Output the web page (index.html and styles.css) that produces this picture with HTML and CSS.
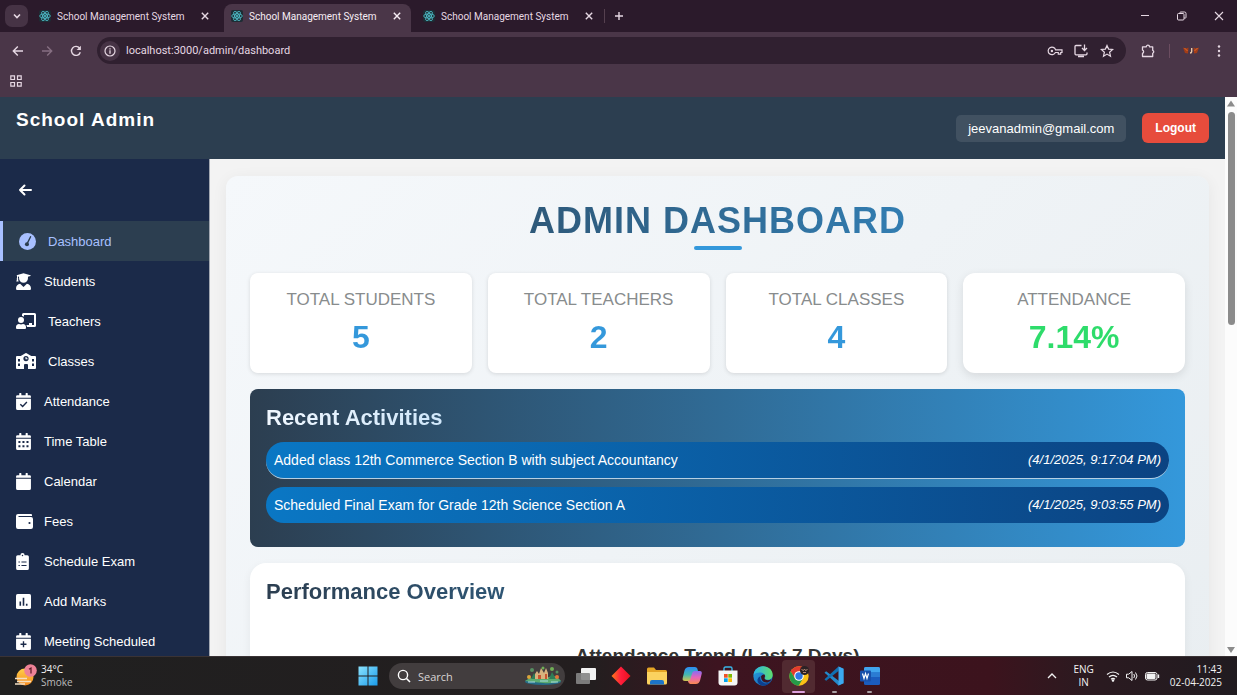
FILE: index.html
```html
<!DOCTYPE html>
<html lang="en">
<head>
<meta charset="utf-8">
<title>School Management System</title>
<link rel="stylesheet" href="styles.css">
</head>
<body>
<svg class="defs" aria-hidden="true">
  <defs>
    <symbol id="react" viewBox="0 0 24 24"><rect width="24" height="24" rx="4" fill="#1d2c34"/><g fill="none" stroke="#4fc0cb" stroke-width="1.7"><ellipse cx="12" cy="12" rx="10.5" ry="4.2"/><ellipse cx="12" cy="12" rx="10.5" ry="4.2" transform="rotate(60 12 12)"/><ellipse cx="12" cy="12" rx="10.5" ry="4.2" transform="rotate(120 12 12)"/></g><circle cx="12" cy="12" r="2.2" fill="#4fc0cb"/></symbol>
    <symbol id="close" viewBox="0 0 14 14"><path d="M3.800 3.800l6.400 6.400M10.200 3.800l-6.400 6.400" fill="none" stroke="currentColor" stroke-width="1.400"/></symbol>
    <linearGradient id="win" x2="1" y2="1"><stop stop-color="#8be3ff"/><stop offset="1" stop-color="#1a9bea"/></linearGradient>
    <linearGradient id="gem" x2="1"><stop stop-color="#ff7a1c"/><stop offset=".5" stop-color="#ff1c3c"/><stop offset="1" stop-color="#e8121c"/></linearGradient>
    <linearGradient id="cop1" x2="0" y2="1"><stop stop-color="#2b8df5"/><stop offset=".5" stop-color="#45b7b0"/><stop offset="1" stop-color="#f3c63a"/></linearGradient>
    <linearGradient id="cop2" x2="0" y2="1"><stop stop-color="#8a6cf0"/><stop offset=".5" stop-color="#e765b8"/><stop offset="1" stop-color="#f98a50"/></linearGradient>
    <linearGradient id="edge1" x2="1" y2="1"><stop stop-color="#2aa5e0"/><stop offset="1" stop-color="#1358b0"/></linearGradient>
    <linearGradient id="edge2" x2="1"><stop stop-color="#2ab4e8"/><stop offset="1" stop-color="#5fdc6c"/></linearGradient>
    <linearGradient id="sun" x2="0" y2="1"><stop stop-color="#ffd04a"/><stop offset="1" stop-color="#f58a1f"/></linearGradient>
  </defs>
</svg>

<header class="chrome">
  <div class="tabstrip">
    <button class="tab-search" aria-label="Search tabs"><svg viewBox="0 0 12 12" width="12" height="12"><path d="M3 4.500l3 3 3-3" fill="none" stroke="currentColor" stroke-width="1.600"/></svg></button>
    <div class="tab"><svg class="favicon"><use href="#react"/></svg><span class="tab-title">School Management System</span><button class="tab-close" aria-label="Close tab"><svg><use href="#close"/></svg></button></div>
    <div class="tab tab-active"><svg class="favicon"><use href="#react"/></svg><span class="tab-title">School Management System</span><button class="tab-close" aria-label="Close tab"><svg><use href="#close"/></svg></button></div>
    <div class="tab"><svg class="favicon"><use href="#react"/></svg><span class="tab-title">School Management System</span><button class="tab-close" aria-label="Close tab"><svg><use href="#close"/></svg></button></div>
    <button class="new-tab" aria-label="New tab"><svg viewBox="0 0 12 12" width="12" height="12"><path d="M6 2v8M2 6h8" stroke="currentColor" stroke-width="1.400"/></svg></button>
    <div class="window-controls">
      <button aria-label="Minimize"><svg viewBox="0 0 12 12" width="12" height="12"><path d="M2 5.500h8" stroke="currentColor"/></svg></button>
      <button aria-label="Restore"><svg viewBox="0 0 12 12" width="12" height="12" fill="none" stroke="currentColor"><rect x="1.500" y="3.500" width="6.500" height="6.500" rx="1"/><path d="M4 3.500v-1q0-.5.500-.5H8.500q1.500 0 1.500 1.500v4q0 .5-.5.500H8"/></svg></button>
      <button aria-label="Close window"><svg viewBox="0 0 12 12" width="12" height="12"><path d="M2 2l8 8M10 2l-8 8" stroke="currentColor" stroke-width="1.100"/></svg></button>
    </div>
  </div>
  <div class="toolbar">
    <div class="nav-buttons">
      <button aria-label="Back"><svg viewBox="0 0 14 14" width="14" height="14"><path d="M12 7H2.500M6.800 2.500L2.300 7l4.500 4.500" fill="none" stroke="currentColor" stroke-width="1.400"/></svg></button>
      <button class="dim" aria-label="Forward"><svg viewBox="0 0 14 14" width="14" height="14"><path d="M2 7h9.500M7.200 2.500L11.700 7l-4.500 4.500" fill="none" stroke="currentColor" stroke-width="1.400"/></svg></button>
      <button aria-label="Reload"><svg viewBox="0 0 14 14" width="14" height="14"><path d="M11.300 8.200A4.500 4.500 0 1 1 10.600 4.200" fill="none" stroke="currentColor" stroke-width="1.400"/><path d="M11.900 1.800v4.300H7.600z" fill="currentColor"/></svg></button>
    </div>
    <div class="omnibox">
      <button class="site-info" aria-label="Site information"><svg viewBox="0 0 12 12" width="12" height="12"><circle cx="6" cy="6" r="5" fill="none" stroke="currentColor" stroke-width="1.200"/><path d="M6 5.300v3.400M6 3.200v1.200" stroke="currentColor" stroke-width="1.300"/></svg></button>
      <input class="address" aria-label="Address" value="localhost:3000/admin/dashboard">
      <button aria-label="Passwords"><svg viewBox="0 0 16 16" width="16" height="16" fill="none" stroke="currentColor" stroke-width="1.200"><path d="M8.600 6.800H15v2.700h-1.300v1.700h-2.400V9.500H8.400A3.800 3.800 0 1 1 8.600 6.800z"/><circle cx="4.900" cy="8" r="1.200" fill="currentColor" stroke="none"/></svg></button>
      <button aria-label="Install app"><svg viewBox="0 0 16 16" width="16" height="16" fill="none" stroke="currentColor" stroke-width="1.300"><path d="M8.500 2.500H3q-1 0-1 1v7.300q0 1 1 1h10q1 0 1-1V9.500M5 13.500h6M11.500 1.500v5.500M9 5l2.500 2.500L14 5"/></svg></button>
      <button aria-label="Bookmark this tab"><svg viewBox="0 0 16 16" width="16" height="16"><path d="M8 2.400l1.600 3.700 4 .4-3 2.700.9 4L8 11.100l-3.500 2.100.9-4-3-2.700 4-.4z" fill="none" stroke="currentColor" stroke-width="1.200"/></svg></button>
    </div>
    <button class="ext" aria-label="Extensions"><svg viewBox="0 0 16 16" width="16" height="16"><path d="M2.500 3.800h3.800a1.600 1.600 0 0 1 3.200 0h3.200v3.500a1.600 1.600 0 0 1 0 3v3.200H2.500v-3.200a1.700 1.700 0 0 0 0-3.200z" fill="none" stroke="currentColor" stroke-width="1.300" stroke-linejoin="round"/></svg></button>
    <span class="divider"></span>
    <button class="profile" aria-label="Profile"><svg viewBox="0 0 16 10" width="16" height="10"><path d="M0 1.500l3 1 2.500-1-.5 6-3-.5zM16 1.500l-3 1-2.500-1 .5 6 3-.5z" fill="#a33d18"/><path d="M1.500 2l3 3M14.500 2l-3 3" stroke="#e06b2c"/><path d="M8.700 2v3.500q0 1.500-1.700 1.500" fill="none" stroke="#e9c9a8" stroke-width="1.400"/></svg></button>
    <button class="menu" aria-label="Menu"><svg viewBox="0 0 12 14" width="12" height="14" fill="currentColor"><circle cx="6" cy="2.500" r="1.200"/><circle cx="6" cy="7" r="1.200"/><circle cx="6" cy="11.500" r="1.200"/></svg></button>
  </div>
  <div class="bookmarks">
    <button aria-label="Apps"><svg viewBox="0 0 12 12" width="12" height="12" fill="none" stroke="currentColor" stroke-width="1.200"><path d="M.8.8h3.700v3.700H.8zM7.500.8h3.700v3.700H7.500zM.8 7.500h3.700v3.700H.8zM7.500 7.500h3.700v3.700H7.500z"/></svg></button>
  </div>
</header>

<div class="viewport">
  <div class="page">
    <header class="topbar">
      <h1 class="brand">School Admin</h1>
      <div class="account"><span class="email">jeevanadmin@gmail.com</span><button class="logout">Logout</button></div>
    </header>
    <div class="layout">
      <aside class="sidebar">
        <button class="collapse" aria-label="Collapse sidebar"><svg viewBox="0 0 16 16" width="16" height="16"><path d="M14 8H3M7.500 3.500L3 8l4.500 4.500" fill="none" stroke="currentColor" stroke-width="2" stroke-linecap="round" stroke-linejoin="round"/></svg></button>
        <nav class="menu-list">
          <a class="item item-wide item-active" href="#"><svg viewBox="0 0 16 16" width="17" height="17"><circle cx="8" cy="8" r="8" fill="currentColor"/><path d="M10.900 3.500l-3 6" stroke="#2c3e50" stroke-width="1.300" stroke-linecap="round"/><circle cx="7.500" cy="10.600" r="1.900" fill="#2c3e50"/></svg>Dashboard</a>
          <a class="item" href="#"><svg viewBox="0 0 14 16" width="15" height="17" fill="currentColor"><path d="M.5 2.200L7 .2l6.500 2q.6.300 0 .6l-2.300.7V5a4.200 4.200 0 0 1-8.400 0V3.500l-1-.3v1.700q.6.500.1 1.100l.5 2H.2l.6-2q-.5-.6.100-1.100V2.900zM3.800 10l3.200 3.100L10.200 10c2.200.2 3.800 1.900 3.800 4.100V15q0 1-1 1H1q-1 0-1-1v-.9C0 11.900 1.600 10.200 3.800 10z"/></svg>Students</a>
          <a class="item item-wide" href="#"><svg viewBox="0 0 20 16" width="20" height="16" fill="currentColor"><path d="M7.500 0h11Q20 0 20 1.500v11q0 1.500-1.500 1.500H11q0-1-.7-2H13v-2h3v2h2V2H8v1.700Q7 3 6 3V1.500Q6 0 7.500 0z"/><circle cx="5" cy="7" r="3"/><path d="M3 11l2 .6L7 11c1.800 0 3 1.400 3 3v1q0 1-1 1H1q-1 0-1-1v-1c0-1.600 1.200-3 3-3z"/></svg>Teachers</a>
          <a class="item item-wide" href="#"><svg viewBox="0 0 20 16" width="20" height="16" fill="currentColor" fill-rule="evenodd"><path d="M9.400.2q.6-.4 1.200 0L15.300 3H19q1 0 1 1v11q0 1-1 1h-7v-4q0-1-1-1H9q-1 0-1 1v4H1q-1 0-1-1V4q0-1 1-1h3.700zM2 6v2.500h2V6zm14 0v2.500h2V6zM2 10.500V13h2v-2.500zm14 0V13h2v-2.500zM10 3a2.600 2.600 0 1 0 0 5.200A2.600 2.600 0 0 0 10 3zm-.5 1h1v1.300h1v1h-2z"/></svg>Classes</a>
          <a class="item" href="#"><svg viewBox="0 0 14 16" width="15" height="17" fill="currentColor"><path d="M0 4.500V3.300Q0 2 1.300 2H3V.5q0-.5.500-.5h1q.5 0 .5.500V2h4V.5q0-.5.500-.5h1q.5 0 .5.500V2h1.700Q14 2 14 3.300v1.200zM0 5.500h14v9q0 1.500-1.500 1.500h-11Q0 16 0 14.500z"/><path d="M4 10.500l2.200 2.200L10.200 8.500" fill="none" stroke="#1b2a49" stroke-width="1.300"/></svg>Attendance</a>
          <a class="item" href="#"><svg viewBox="0 0 14 16" width="15" height="17" fill="currentColor"><path d="M0 4.500V3.300Q0 2 1.300 2H3V.5q0-.5.500-.5h1q.5 0 .5.500V2h4V.5q0-.5.500-.5h1q.5 0 .5.500V2h1.700Q14 2 14 3.300v1.200zM0 5.500h14v9q0 1.500-1.500 1.500h-11Q0 16 0 14.500z"/><path d="M2.200 8.500h9.600M2.200 12.500h9.600" stroke="#1b2a49" stroke-width="1.800" stroke-dasharray="1.900 1.900"/></svg>Time Table</a>
          <a class="item" href="#"><svg viewBox="0 0 14 16" width="15" height="17" fill="currentColor"><path d="M0 4.500V3.300Q0 2 1.300 2H3V.5q0-.5.500-.5h1q.5 0 .5.500V2h4V.5q0-.5.500-.5h1q.5 0 .5.500V2h1.700Q14 2 14 3.300v1.200zM0 5.500h14v9q0 1.500-1.500 1.500h-11Q0 16 0 14.500z"/></svg>Calendar</a>
          <a class="item item-fees" href="#"><svg viewBox="0 0 17 15" width="17" height="15" fill="currentColor"><path d="M2 0h13q1 0 1 1v1H2.500v1H15q2 0 2 2v8q0 2-2 2H2q-2 0-2-2V2q0-2 2-2z"/><circle cx="13.500" cy="9" r="1.100" fill="#1b2a49"/></svg>Fees</a>
          <a class="item item-clip" href="#"><svg viewBox="0 0 12 16" width="13" height="17" fill="currentColor"><path d="M1.500 2H4a2 2 0 0 1 4 0h2.500Q12 2 12 3.500v11q0 1.500-1.500 1.500h-9Q0 16 0 14.500v-11Q0 2 1.500 2z"/><path d="M2.200 8.500h1.300M5 8.500h4.800M2.200 11.800h1.300M5 11.800h4.800" stroke="#1b2a49"/><circle cx="6" cy="2.300" r=".7" fill="#1b2a49"/></svg>Schedule Exam</a>
          <a class="item" href="#"><svg viewBox="0 0 14 14" width="15" height="15" fill="currentColor"><rect width="14" height="14" rx="1.500"/><path d="M4 7v4M7 3.500V11M10 9v2" stroke="#1b2a49" stroke-width="1.500"/></svg>Add Marks</a>
          <a class="item" href="#"><svg viewBox="0 0 14 16" width="15" height="17" fill="currentColor"><path d="M0 4.500V3.300Q0 2 1.300 2H3V.5q0-.5.500-.5h1q.5 0 .5.500V2h4V.5q0-.5.500-.5h1q.5 0 .5.500V2h1.700Q14 2 14 3.300v1.200zM0 5.500h14v9q0 1.500-1.500 1.500h-11Q0 16 0 14.500z"/><path d="M7 7.800v5.600M4.200 10.600h5.600" stroke="#1b2a49" stroke-width="1.300"/></svg>Meeting Scheduled</a>
        </nav>
      </aside>
      <main class="main">
        <section class="board">
          <h2 class="title">ADMIN DASHBOARD</h2>
          <div class="cards">
            <article class="card"><h3>TOTAL STUDENTS</h3><p>5</p></article>
            <article class="card"><h3>TOTAL TEACHERS</h3><p>2</p></article>
            <article class="card"><h3>TOTAL CLASSES</h3><p>4</p></article>
            <article class="card card-rate"><h3>ATTENDANCE</h3><p>7.14%</p></article>
          </div>
          <section class="recent">
            <h3 class="heading heading-light">Recent Activities</h3>
            <ul>
              <li><span>Added class 12th Commerce Section B with subject Accountancy</span><em>(4/1/2025, 9:17:04 PM)</em></li>
              <li><span>Scheduled Final Exam for Grade 12th Science Section A</span><em>(4/1/2025, 9:03:55 PM)</em></li>
            </ul>
          </section>
          <section class="performance">
            <h3 class="heading">Performance Overview</h3>
            <h4>Attendance Trend (Last 7 Days)</h4>
          </section>
        </section>
      </main>
    </div>
  </div>
  <div class="scrollbar">
    <svg viewBox="0 0 12 12" width="12" height="12"><path d="M6 3.500l4 6H2z" fill="#8b8b8b"/></svg>
    <div class="track"><div class="thumb"></div></div>
    <svg viewBox="0 0 12 12" width="12" height="12"><path d="M6 9L2 3h8z" fill="#8b8b8b"/></svg>
  </div>
</div>

<footer class="taskbar">
  <button class="weather"><svg viewBox="0 0 24 24" width="24" height="24"><circle cx="11" cy="13" r="8.500" fill="url(#sun)"/><path d="M1 14.500h12M3 17.500h14M1 20h10" stroke="#f3dfc4" stroke-width="1.400"/><circle cx="16.500" cy="6.500" r="6.300" fill="#ee8296"/><path d="M15 5.300l2-1.300v5.500" fill="none" stroke="#5a1826" stroke-width="1.200"/></svg><span><b>34°C</b><i>Smoke</i></span></button>
  <div class="dock">
    <button class="start" aria-label="Start"><svg viewBox="0 0 20 20" width="20" height="20" fill="url(#win)"><path d="M.5.5h9v9h-9zM10.500.5h9v9h-9zM.5 10.500h9v9h-9zM10.500 10.500h9v9h-9z"/></svg></button>
    <label class="search">
      <svg viewBox="0 0 14 14" width="14" height="14"><circle cx="6" cy="6" r="4.600" fill="none" stroke="#fff" stroke-width="1.400"/><path d="M9.500 9.500l3.500 3.500" stroke="#fff" stroke-width="1.600"/></svg>
      <input type="text" placeholder="Search" aria-label="Search">
      <svg viewBox="0 0 40 20" width="40" height="20"><ellipse cx="20" cy="15.500" rx="18" ry="3.600" fill="#256b87"/><path d="M2 15q6-5 12-3t12-1 12 4q-8 3-18 2T2 15z" fill="#5cab70"/><path d="M8 13l3-6 3 6zM26 13l3-7 4 7z" fill="#2f7d57"/><path d="M12 13V8l2-3 2 3 2-6 3 5 2-5 2 5v6z" fill="#d8b27e"/><path d="M15 13V9h3v4zM22 13V8h2v5z" fill="#c8542f"/><circle cx="6" cy="11" r="2" fill="#dba63b"/><circle cx="34" cy="11" r="2" fill="#e0783a"/><circle cx="29" cy="3" r="2" fill="#6fae56"/><circle cx="34" cy="6" r="1.500" fill="#558e61"/><circle cx="9" cy="4" r="2" fill="#558e61"/><circle cx="20" cy="2" r="1.500" fill="#6fae56"/><path d="M5 16h7M17 15h8M28 16h7" stroke="#a7dce0"/></svg>
    </label>
    <div class="apps">
      <button aria-label="Task view"><svg viewBox="0 0 20 20" width="20" height="20"><rect x="5" y="2" width="15" height="12" rx="1" fill="#f2f2f2"/><rect x="0" y="7" width="14" height="11" rx="1" fill="#858585" opacity=".9"/></svg></button>
      <button aria-label="Diamond"><svg viewBox="0 0 20 20" width="20" height="20"><path d="M10 .5l9.500 9.500-9.500 9.500L.5 10z" fill="url(#gem)"/></svg></button>
      <button aria-label="File Explorer"><svg viewBox="0 0 20 20" width="20" height="20"><path d="M0 3q0-1.500 1.500-1.500H7l2 2.500h9.500Q20 4 20 5.500V16H0z" fill="#e5a525"/><path d="M0 6h20v11q0 1.500-1.500 1.500h-17Q0 18.500 0 17z" fill="#fbd25f"/><path d="M3 18.500V16q0-2 2-2h10q2 0 2 2v2.500z" fill="#1c74c9"/></svg></button>
      <button aria-label="Copilot"><svg viewBox="0 0 20 20" width="20" height="20"><path d="M12.500 5H18q2.300 0 1.700 2.800l-1.600 6.500q-.8 3.700-4.300 3.700H8z" fill="url(#cop2)"/><path d="M7 1h6q1.800 0 2.300 1.600L16 5h-1.500q-1.700 0-2.200 1.800L10 14.500Q9 18 6 15H3q-3 0-2.300-3L2.500 4.500Q3.400 1 7 1z" fill="url(#cop1)"/><path d="M9 18q-2.500 0-3-3 1.800 0 2.400-2l2-6.500Q11 4.800 13 5h5q-2.500 0-3.200 2.500l-2.300 8Q11.700 18 9 18z" fill="url(#cop2)"/></svg></button>
      <button aria-label="Microsoft Store"><svg viewBox="0 0 20 20" width="20" height="20"><path d="M6 5V2.500Q6 1 7.500 1h5Q14 1 14 2.500V5" fill="none" stroke="#39b5e7" stroke-width="1.400"/><path d="M.5 4.500h19v12q0 3-3 3h-13q-3 0-3-3z" fill="#f5f5f5"/><path d="M6 8h3.700v3.700H6z" fill="#ef5325"/><path d="M10.300 8H14v3.700h-3.700z" fill="#7fba00"/><path d="M6 12.300h3.700V16H6z" fill="#00a4ef"/><path d="M10.300 12.300H14V16h-3.700z" fill="#fdb900"/></svg></button>
      <button aria-label="Edge"><svg viewBox="0 0 20 20" width="20" height="20"><circle cx="10" cy="10" r="9.700" fill="url(#edge1)"/><path d="M.5 9C1 4 5 .3 10 .3c5.500 0 9.700 4 9.700 8.500 0 3-2 5-5 5-2 0-3.500-.8-3-1.800.8-1 .8-2 .2-3C10 6 4 5.500.5 9z" fill="url(#edge2)"/><path d="M7.500 10q-1.500 5 4 7.300 3.500.8 6.500-2-3 4.400-8 4.400-6-1-5.500-6.200Q5 11 7.500 10z" fill="#0d3f8e"/><path d="M8 10.500q1-2.500 3.500-2 1 1.500 0 3.300-.5 1.700 3 2.400 2.500 0 4-1-1 2.800-4 3.300-6 .5-6.500-6z" fill="#3c1420"/></svg></button>
      <button class="open front" aria-label="Chrome"><svg viewBox="0 0 20 20" width="20" height="20"><circle cx="10" cy="10" r="9.700" fill="#fbc116"/><path d="M1.600 5.200A9.700 9.700 0 0 1 18.400 5.200H10L6 12.400z" fill="#e33b2e"/><path d="M1.600 5.200A9.700 9.700 0 0 0 9.600 19.700L14 12.400H6z" fill="#259b48"/><circle cx="10" cy="10" r="4.800" fill="#fff"/><circle cx="10" cy="10" r="3.700" fill="#2f78e4"/><circle cx="15.500" cy="4.500" r="4.500" fill="#2b2225"/><path d="M12.500 3.500l2 1 1-1.500 1 1.500 2-1M14 6.500h3" fill="none" stroke="#b98a72"/></svg></button>
      <button class="open" aria-label="Visual Studio Code"><svg viewBox="0 0 20 20" width="20" height="20"><path d="M14.500.5l5 2.300v14.400l-5 2.300L2.300 8.300.5 6.800l1.600-1.500L15 15V5z" fill="#2489ca"/><path d="M14.500 19.500L2 14.700.5 13.200 14.500.5V5L2.200 14.700z" fill="#1070b3"/><path d="M14.500.5l5 2.300v14.400l-5 2.300z" fill="#3ca9f0"/></svg></button>
      <button class="open" aria-label="Word"><svg viewBox="0 0 20 20" width="20" height="20"><rect x="4" y="1" width="16" height="18" rx="1.500" fill="#1b5cbe"/><path d="M4 6.500V2.500Q4 1 5.500 1h13Q20 1 20 2.500v4z" fill="#41a5ee"/><path d="M4 6.500h16V11H4z" fill="#2b7cd3"/><rect x="0" y="4.500" width="11" height="11" rx="1" fill="#1850ab"/><path d="M2.500 7.500l1.500 5 1.500-5 1.500 5 1.500-5" fill="none" stroke="#fff" stroke-width="1.200"/></svg></button>
    </div>
  </div>
  <div class="tray">
    <button aria-label="Hidden icons"><svg viewBox="0 0 12 12" width="12" height="12"><path d="M2 8l4-4 4 4" fill="none" stroke="currentColor" stroke-width="1.300"/></svg></button>
    <button class="lang">ENG<br>IN</button>
    <button class="status" aria-label="Network, volume and battery">
      <svg viewBox="0 0 14 14" width="14" height="14" fill="none" stroke="currentColor" stroke-width="1.200"><path d="M1 5.500q6-5 12 0M3 8q4-3.400 8 0M5 10.300q2-1.700 4 0"/><circle cx="7" cy="11.500" r=".7" fill="currentColor"/></svg>
      <svg viewBox="0 0 14 14" width="14" height="14" fill="none" stroke="currentColor"><path d="M1.500 5.200h2.200L7 2.500v9L3.700 8.800H1.500zM8.800 5q1.500 2 0 4M10.500 3.500q3 3.500 0 7"/></svg>
      <svg viewBox="0 0 16 14" width="16" height="14"><rect x="1.500" y="3.500" width="11.500" height="7.500" rx="2" fill="none" stroke="currentColor"/><rect x="2.500" y="4.500" width="9" height="5.500" rx="1" fill="currentColor"/><path d="M14.500 5.500v3.500" stroke="currentColor" stroke-width="1.400"/></svg>
    </button>
    <button class="clock">11:43<br>02-04-2025</button>
  </div>
</footer>
</body>
</html>
```
FILE: styles.css
```css
* {
  box-sizing: border-box;
  margin: 0;
  padding: 0;
}

body {
  display: flex;
  flex-direction: column;
  height: 100vh;
  overflow: hidden;
  font-family: "Liberation Sans", Arial, sans-serif;
}

button {
  display: flex;
  align-items: center;
  justify-content: center;
  border: 0;
  background: none;
  color: inherit;
  font: inherit;
}

input {
  min-width: 0;
  border: 0;
  outline: 0;
  background: none;
  color: inherit;
  font: inherit;
}

svg { flex: none; }
ul { list-style: none; }

.defs {
  position: absolute;
  width: 0;
  height: 0;
}

/* Browser window */
.chrome {
  flex: none;
  background: #4a3648;
  color: #e6d8e3;
  font-family: Roboto, "Open Sans", sans-serif;
}

.tabstrip {
  display: flex;
  align-items: center;
  height: 32px;
  padding-left: 5px;
  background: #2b1a2b;
}

.tab-search {
  width: 23px;
  height: 22px;
  margin-right: 4px;
  border-radius: 7px;
  background: #463345;
}

.tab {
  display: flex;
  align-items: center;
  gap: 6px;
  align-self: flex-end;
  width: 187px;
  height: 28px;
  margin-right: 5px;
  padding: 0 7px 4px;
  border-radius: 8px 8px 0 0;
  font-size: 10px;
}

.tab-active {
  background: #4a3648;
  color: #f6edf4;
}

.favicon {
  width: 12px;
  height: 12px;
}

.tab-title {
  flex: 1;
  white-space: nowrap;
}

.tab-close svg {
  width: 14px;
  height: 14px;
}

.new-tab {
  width: 28px;
  height: 14px;
  margin-left: -4px;
  border-left: 1px solid #55404f;
}

.window-controls {
  display: flex;
  margin-left: auto;
}

.window-controls button {
  width: 37px;
  height: 32px;
}

.toolbar {
  display: flex;
  align-items: center;
  height: 37px;
  padding: 0 4px 0 3px;
}

.nav-buttons {
  display: flex;
  margin-right: 7px;
}

.nav-buttons button {
  width: 29px;
  height: 28px;
}

.nav-buttons .dim { color: #866f82; }

.omnibox {
  display: flex;
  flex: 1;
  align-items: center;
  gap: 10px;
  height: 27px;
  padding: 0 11px 0 3px;
  border-radius: 14px;
  background: #302030;
}

.site-info {
  width: 20px;
  height: 20px;
  border-radius: 10px;
  background: #463345;
}

.address {
  flex: 1;
  margin-left: -4px;
  font-size: 11px;
}

.ext {
  width: 28px;
  margin-left: 8px;
}

.divider {
  width: 1px;
  height: 14px;
  margin: 0 7px;
  background: #6b4d60;
}

.profile { width: 28px; }
.menu { width: 28px; }

.bookmarks {
  display: flex;
  height: 28px;
  padding: 6px 10px;
}

.bookmarks button {
  height: 12px;
}

/* Page */
.viewport {
  display: flex;
  flex: 1;
  min-height: 0;
}

.page {
  display: flex;
  flex: 1;
  flex-direction: column;
  min-width: 0;
  overflow: hidden;
  background: #f3f3f3;
}

.topbar {
  display: flex;
  flex: none;
  align-items: center;
  justify-content: space-between;
  height: 62px;
  padding: 0 16px;
  background: #2c3e50;
  color: #fff;
}

.brand {
  margin-bottom: 16px;
  font-size: 19px;
  line-height: 24px;
  letter-spacing: 1px;
}

.account {
  display: flex;
  align-items: center;
  gap: 16px;
}

.email {
  padding: 4px 12px;
  border-radius: 5px;
  background: #415161;
  font-size: 13px;
  line-height: 19px;
}

.logout {
  height: 30px;
  padding: 0 13px;
  border-radius: 6px;
  background: #e74c3c;
  font-size: 12px;
  font-weight: bold;
}

.layout {
  display: flex;
  flex: 1;
  min-height: 0;
}

.sidebar {
  flex: none;
  width: 210px;
  border-right: 1px solid #a3a8b2;
  background: #1b2a49;
  color: #fff;
}

.collapse {
  width: 50px;
  height: 62px;
}

.item {
  display: flex;
  align-items: center;
  gap: 13px;
  height: 40px;
  padding-left: 16px;
  color: #fff;
  font-size: 13px;
  text-decoration: none;
}

.item-active {
  border-left: 3px solid #a8c0ff;
  background: #2c3e50;
  color: #a8c0ff;
}

.item-wide { gap: 12px; }
.item-fees { gap: 11px; }
.item-clip { gap: 15px; }

.main {
  flex: 1;
  min-width: 0;
  padding: 17px 16px;
  overflow: hidden;
}

.board {
  padding: 24px;
  border-radius: 12px;
  background: linear-gradient(135deg, #f5f8fb, #e9eef1);
  box-shadow: 0 3px 16px rgba(0, 0, 0, 0.06);
}

.title,
.heading,
.card p {
  background: linear-gradient(90deg, #2c3e50, #3498db);
  background-clip: text;
  -webkit-background-clip: text;
  color: transparent;
}

.title {
  position: relative;
  margin-bottom: 32px;
  font-size: 36px;
  line-height: 41px;
  letter-spacing: 1px;
  text-align: center;
}

.title::after {
  content: "";
  position: absolute;
  bottom: -9px;
  left: 50%;
  width: 48px;
  height: 4px;
  margin-left: -24px;
  border-radius: 2px;
  background: #3498db;
}

.cards {
  display: grid;
  grid-template-columns: repeat(4, 1fr);
  gap: 16px;
}

.card {
  padding: 16px;
  border-radius: 8px;
  background: #fff;
  box-shadow: 0 1px 4px rgba(0, 0, 0, 0.12);
  text-align: center;
}

.card-rate {
  border-radius: 12px;
  box-shadow: 0 3px 10px rgba(0, 0, 0, 0.1);
}

.card h3 {
  margin-bottom: 6px;
  color: #888c8d;
  font-size: 17px;
  font-weight: normal;
  line-height: 22px;
}

.card p {
  background-image: linear-gradient(#3498db, #3498db);
  font-size: 32px;
  font-weight: bold;
  line-height: 40px;
}

.card-rate p { background-image: linear-gradient(#2edc6b, #2edc6b); }

.recent {
  margin: 16px 0;
  padding: 16px 16px 24px;
  border-radius: 8px;
  background: linear-gradient(90deg, #2c3e50, #3498db);
}

.heading {
  font-size: 22px;
  line-height: 25px;
}

.heading-light { background-image: linear-gradient(90deg, #f0f7ff, #4ba6e6); }

.recent ul {
  display: flex;
  flex-direction: column;
  gap: 8px;
  margin-top: 12px;
}

.recent li {
  display: flex;
  justify-content: space-between;
  padding: 8px;
  border-bottom: 1px solid #b5cfe3;
  border-radius: 18px;
  background: linear-gradient(90deg, #0a77c4, #0b4382);
  color: #fff;
  font-size: 14px;
  line-height: 20px;
}

.recent li:last-child { border-bottom: 0; }
.recent em { font-size: 13px; }

.performance {
  padding: 16px;
  border-radius: 16px;
  background: #fff;
  box-shadow: 0 3px 10px rgba(0, 0, 0, 0.06);
}

.performance h4 {
  margin-top: 40px;
  color: #333;
  font-size: 19px;
  line-height: 24px;
  text-align: center;
}

.scrollbar {
  display: flex;
  flex: none;
  flex-direction: column;
  width: 12px;
  background: #fcfcfc;
}

.track {
  flex: 1;
  padding: 3px 2px 0 3px;
}

.thumb {
  height: 40%;
  border-radius: 4px;
  background: #8b8b8b;
}

/* Taskbar */
.taskbar {
  display: grid;
  flex: none;
  grid-template-columns: 1fr auto 1fr;
  align-items: center;
  height: 39px;
  border-top: 1px solid #3a3335;
  background: linear-gradient(90deg, #202020 0%, #231e1f 48%, #3d1420 58%, #3c131d 80%, #2b1a20 88%, #201b20 100%);
  color: #f3f3f3;
  font-family: "Open Sans", sans-serif;
  font-size: 10px;
}

.weather {
  justify-content: flex-start;
  gap: 3px;
  padding-left: 14px;
  line-height: 13px;
  text-align: left;
}

.weather b,
.weather i {
  display: block;
  font-style: normal;
  font-weight: normal;
}

.weather i { color: #bbb; }

.dock {
  display: flex;
  align-items: center;
  gap: 4px;
}

.start {
  width: 34px;
  height: 34px;
}

.search {
  display: flex;
  align-items: center;
  gap: 7px;
  width: 176px;
  height: 26px;
  padding: 0 2px 0 8px;
  border-radius: 13px;
  background: #423d3e;
  font-size: 11px;
}

.search input { flex: 1; }
.search input::placeholder { color: #d8d4d5; }

.apps {
  display: flex;
  justify-content: space-between;
  width: 317px;
}

.apps button {
  position: relative;
  width: 33px;
  height: 33px;
  border-radius: 4px;
}

.front { background: #512a31; }

.open::after {
  content: "";
  position: absolute;
  bottom: 0;
  left: 14px;
  width: 5px;
  height: 2px;
  border-radius: 1px;
  background: #aaa0a4;
}

.front::after {
  left: 10px;
  width: 13px;
  background: #dda0dd;
}

.tray {
  display: flex;
  align-items: center;
  justify-content: flex-end;
  padding-right: 15px;
  line-height: 13px;
}

.lang {
  margin: 0 12px 0 15px;
  text-align: center;
}

.status { gap: 5px; }

.clock {
  margin-left: 10px;
  text-align: right;
}
```
